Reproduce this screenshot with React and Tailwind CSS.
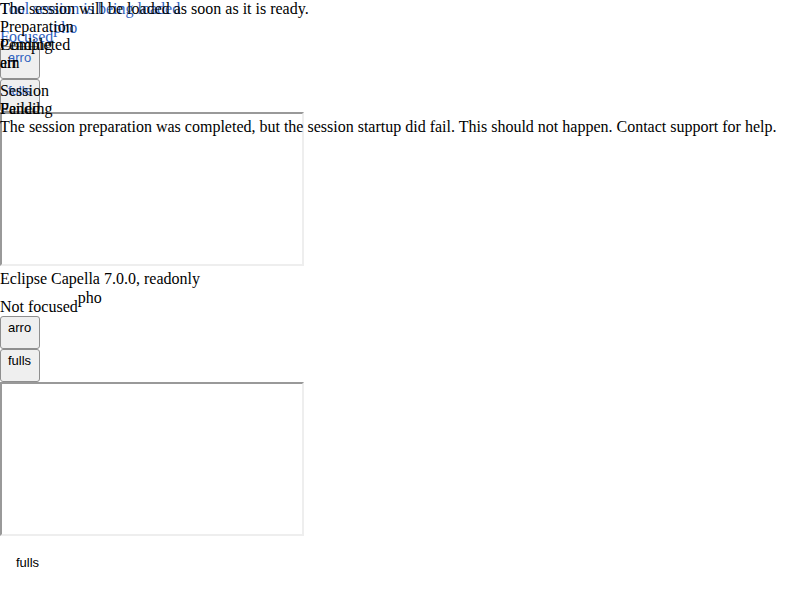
import React from 'react';

// Session viewer rendered without its stylesheet: stacked cards plus
// absolutely positioned status layers that overlap the first card.

const ToolButton = ({ label }) => (
  <button className="flex items-start w-[40px] h-[33px] px-[7px] pt-[3px] bg-[#efefef] border border-[#8f8f8f] rounded-[3px] font-['Liberation_Sans',sans-serif] text-[13px] leading-[15px] overflow-hidden whitespace-nowrap">
    {label}
  </button>
);

const SessionCard = ({ title, focused, color }) => {
  return (
    <div className={`flex flex-col items-start ${color}`}>
      <div className="leading-[18px] h-[18px] whitespace-nowrap">{title}</div>
      <div className="h-[28px] pt-[10px] leading-[18px] whitespace-nowrap">
        {focused ? 'Focused' : 'Not focused'}
        <span className="relative -top-[9px]">pho</span>
      </div>
      <ToolButton label="arro" />
      <ToolButton label="fulls" />
      <div className="w-[304px] h-[154px] mb-[4px] border-2 border-t-[#999999] border-l-[#999999] border-r-[#eeeeee] border-b-[#eeeeee] bg-white" />
    </div>
  );
};

const App = () => {
  return (
    <div className="relative w-[800px] h-[600px] bg-white text-black font-['Liberation_Serif',serif] text-[16px] leading-[18px] overflow-hidden">
      <SessionCard title="Tool session is being loaded" focused color="text-[#2f62c0]" />
      <SessionCard title="Eclipse Capella 7.0.0, readonly" focused={false} color="text-black" />

      <div className="pl-4 pt-[15px] font-['Liberation_Sans',sans-serif] text-[13px] leading-[15px]">
        fulls
      </div>

      {/* Status layer drawn over the first card */}
      <div className="absolute top-0 left-0 flex flex-col whitespace-nowrap">
        <div>The session will be loaded as soon as it is ready.</div>
        <div>Preparation</div>
        <div>Pending</div>
        <div className="w-[24px] h-[28px] overflow-hidden">err</div>
        <div>Session</div>
        <div>Pending</div>
        <div>
          The session preparation was completed, but the session startup did fail. This should not happen. Contact support for help.
        </div>
      </div>

      {/* Second state layer, overlapping the first */}
      <div className="absolute top-[36px] left-0 flex flex-col gap-[46px] whitespace-nowrap">
        <div>Completed</div>
        <div>Failed</div>
      </div>
      <div className="absolute top-[54px] left-0 w-[24px] overflow-hidden whitespace-nowrap">ain</div>
    </div>
  );
};

export default App;
